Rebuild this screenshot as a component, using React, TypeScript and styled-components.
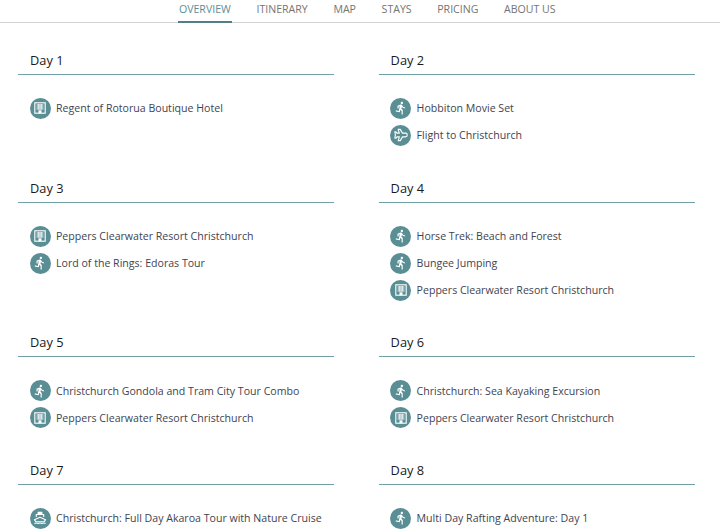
import { createGlobalStyle } from "styled-components";
import styled from "styled-components";

const GlobalStyle = createGlobalStyle`
    html, body {
        margin: 0;
        padding: 0;
        background: #fff;
        font-family: "Open Sans", "Liberation Sans", sans-serif;
    }
`;

const Page = styled.div`
    width: 720px;
    height: 532px;
    overflow: hidden;
`;

const Nav = styled.nav`
    display: flex;
    justify-content: center;
    gap: 23.6px;
    height: 22px;
    padding-left: 14.6px;
    border-bottom: 1px solid #d4d4d4;
`;

const NavItem = styled.a<{ $active?: boolean }>`
    padding: 0 1px;
    font-size: 10.6px;
    line-height: 18px;
    color: ${(p) => (p.$active ? "#5b8f96" : "#757575")};
    border-bottom: ${(p) => (p.$active ? "2px solid #4f8087" : "0")};
    box-sizing: border-box;
    height: ${(p) => (p.$active ? "23px" : "22px")};
`;

const Days = styled.div`
    display: grid;
    grid-template-columns: 316px 316px;
    column-gap: 44.6px;
    padding: 28px 0 0 18px;
`;

const Day = styled.section`
    padding-bottom: 29.8px;
`;

const DayTitle = styled.h2`
    margin: 0;
    padding: 0 0 4px 12px;
    height: 19px;
    font-size: 12.8px;
    line-height: 19px;
    font-weight: 500;
    color: #1a1a1a;
    border-bottom: 1px solid #6fa0a6;
`;

const Stops = styled.ul`
    list-style: none;
    margin: 0;
    padding: 19.9px 0 0 11.8px;
`;

const Stop = styled.li`
    display: flex;
    align-items: center;
    gap: 5.2px;
    height: 27px;
    font-size: 10.6px;
    color: #3f4450;
`;

const Badge = styled.span`
    display: flex;
    align-items: center;
    justify-content: center;
    flex: none;
    width: 21px;
    height: 21px;
    border-radius: 50%;
    background: #5a8e95;
`;

function HotelIcon() {
    return (
        <svg width="12" height="12" viewBox="0 0 12 12" fill="none" stroke="#fff">
            <rect x="0.8" y="0.8" width="10.4" height="10.4" strokeWidth="1.1" />
            <path d="M2.500 3h7M2.500 5h7M2.500 7h7M4.300 2v5.500M6 2v5.500M7.700 2v5.500" strokeWidth="0.8" />
            <rect x="4.500" y="8.300" width="3" height="3" fill="#fff" stroke="none" />
        </svg>
    );
}

function RunIcon() {
    return (
        <svg width="14" height="14" viewBox="0 0 24 24" fill="#fff">
            <path d="M13.49 5.48c1.1 0 2-.9 2-2s-.9-2-2-2-2 .9-2 2 .9 2 2 2zm-3.6 13.9l1-4.4 2.1 2v6h2v-7.5l-2.1-2 .6-3c1.3 1.5 3.3 2.5 5.5 2.5v-2c-1.9 0-3.5-1-4.3-2.4l-1-1.6c-.4-.6-1-1-1.7-1-.3 0-.5.1-.8.1l-5.2 2.2v4.7h2v-3.4l1.8-.7-1.6 8.1-4.9-1-.4 2 7 1.4z" />
        </svg>
    );
}

function PlaneIcon() {
    return (
        <svg width="14" height="14" viewBox="0 0 15 15" fill="none" stroke="#fff" strokeWidth="1.2" strokeLinejoin="round">
            <path d="M4.500 1.500h2.200l2.400 4h3.200c1 0 1.900.9 1.900 2s-.9 2-1.900 2H9.100l-2.400 4H4.500l1.200-4H3.200l-1 1.300H.9l.6-3.300-.6-3.300h1.300l1 1.300h2.500z" />
        </svg>
    );
}

function BoatIcon() {
    return (
        <svg width="14" height="14" viewBox="0 0 15 15" fill="none" stroke="#fff" strokeWidth="1.2" strokeLinejoin="round">
            <path d="M5.500 1.500h4v2h-4z" fill="#fff" />
            <path d="M3.500 6.500V3.800h8v2.700" />
            <path d="M1.500 9.300l6-2.500 6 2.500-1.500 2.200h-9z" />
            <path d="M1.500 13.500c1.500-.9 2.500-.9 4 0 1.500-.9 2.500-.9 4 0 1.500-.9 2.500-.9 4 0" />
        </svg>
    );
}

type Kind = "hotel" | "run" | "plane" | "boat";

const icons: Record<Kind, () => React.ReactElement> = {
    hotel: HotelIcon,
    run: RunIcon,
    plane: PlaneIcon,
    boat: BoatIcon,
};

const nav = ["Overview", "Itinerary", "Map", "Stays", "Pricing", "About us"];

const days: { title: string; stops: [Kind, string][] }[] = [
    { title: "Day 1", stops: [["hotel", "Regent of Rotorua Boutique Hotel"]] },
    { title: "Day 2", stops: [["run", "Hobbiton Movie Set"], ["plane", "Flight to Christchurch"]] },
    { title: "Day 3", stops: [["hotel", "Peppers Clearwater Resort Christchurch"], ["run", "Lord of the Rings: Edoras Tour"]] },
    { title: "Day 4", stops: [["run", "Horse Trek: Beach and Forest"], ["run", "Bungee Jumping"], ["hotel", "Peppers Clearwater Resort Christchurch"]] },
    { title: "Day 5", stops: [["run", "Christchurch Gondola and Tram City Tour Combo"], ["hotel", "Peppers Clearwater Resort Christchurch"]] },
    { title: "Day 6", stops: [["run", "Christchurch: Sea Kayaking Excursion"], ["hotel", "Peppers Clearwater Resort Christchurch"]] },
    { title: "Day 7", stops: [["boat", "Christchurch: Full Day Akaroa Tour with Nature Cruise"]] },
    { title: "Day 8", stops: [["run", "Multi Day Rafting Adventure: Day 1"]] },
];

export default function App() {
    return (
        <Page>
            <GlobalStyle />
            <Nav>
                {nav.map((item, i) => (
                    <NavItem key={item} $active={i === 0}>
                        {item.toUpperCase()}
                    </NavItem>
                ))}
            </Nav>
            <Days>
                {days.map((day) => (
                    <Day key={day.title}>
                        <DayTitle>{day.title}</DayTitle>
                        <Stops>
                            {day.stops.map(([kind, name]) => {
                                const Icon = icons[kind];
                                return (
                                    <Stop key={name}>
                                        <Badge>
                                            <Icon />
                                        </Badge>
                                        {name}
                                    </Stop>
                                );
                            })}
                        </Stops>
                    </Day>
                ))}
            </Days>
        </Page>
    );
}
